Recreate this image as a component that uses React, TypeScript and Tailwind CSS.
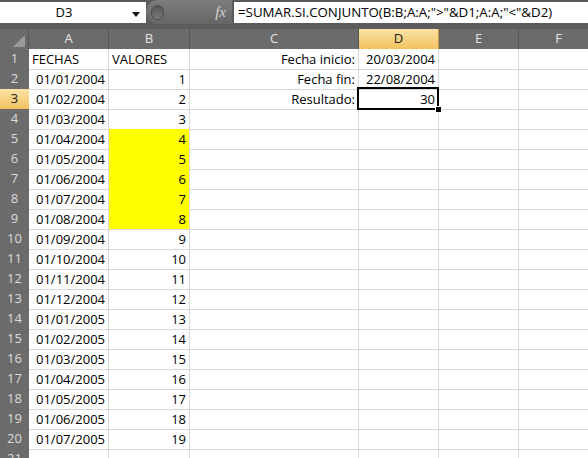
import React from "react";

const cols = ["A", "B", "C", "D", "E", "F"];

const dates = [
  "01/01/2004", "01/02/2004", "01/03/2004", "01/04/2004", "01/05/2004", "01/06/2004",
  "01/07/2004", "01/08/2004", "01/09/2004", "01/10/2004", "01/11/2004", "01/12/2004",
  "01/01/2005", "01/02/2005", "01/03/2005", "01/04/2005", "01/05/2005", "01/06/2005",
  "01/07/2005",
];

type Cell = { text: string; right?: boolean; yellow?: boolean };

// build the 21 visible rows
const rows: Cell[][] = Array.from({ length: 21 }, (_, i) => {
  const r = i + 1;
  const row: Cell[] = cols.map(() => ({ text: "" }));
  if (r === 1) {
    row[0] = { text: "FECHAS" };
    row[1] = { text: "VALORES" };
  } else if (r <= 20) {
    row[0] = { text: dates[r - 2], right: true };
    row[1] = { text: String(r - 1), right: true, yellow: r >= 5 && r <= 9 };
  }
  if (r === 1) {
    row[2] = { text: "Fecha inicio:", right: true };
    row[3] = { text: "20/03/2004", right: true };
  }
  if (r === 2) {
    row[2] = { text: "Fecha fin:", right: true };
    row[3] = { text: "22/08/2004", right: true };
  }
  if (r === 3) {
    row[2] = { text: "Resultado:", right: true };
    row[3] = { text: "30", right: true };
  }
  return row;
});

const grid = "grid grid-cols-[29px_80px_81px_169px_80px_80px_80px]";

export default function App() {
  return (
    <div
      className="w-[588px] h-[458px] overflow-hidden bg-white text-black"
      style={{ fontFamily: '"Open Sans", "Liberation Sans", sans-serif' }}
    >
      {/* Formula bar */}
      <div className="h-[29px] bg-[#5c5c5c] pt-[2px]">
        <div className="flex h-[21px]">
          {/* Name box */}
          <div className="relative w-[146px] bg-white flex items-center">
            <span className="w-[128px] text-center text-[13px]">D3</span>
            <svg className="absolute left-[132px] top-[10px]" width="8" height="5" viewBox="0 0 8 5">
              <path d="M0 0h8L4 5z" fill="#111" />
            </svg>
          </div>
          {/* Grip pill + fx */}
          <div className="relative w-[86px] -mt-[2px] h-[24px] rounded-l-full bg-gradient-to-b from-[#7c7c7c] to-[#666] flex items-center">
            <div className="ml-[5px] w-[13px] h-[15px] rounded-full bg-gradient-to-b from-[#555] to-[#7a7a7a] border border-[#4c4c4c]" />
            <span
              className="ml-auto mr-[6px] italic text-[15px] text-[#d6d6d6]"
              style={{ fontFamily: '"Liberation Serif", serif' }}
            >
              fx
            </span>
          </div>
          {/* Formula input */}
          <div className="flex-1 ml-[2px] bg-white flex items-center pl-[4px] text-[13.3px] whitespace-nowrap">
            =SUMAR.SI.CONJUNTO(B:B;A:A;"&gt;"&amp;D1;A:A;"&lt;"&amp;D2)
          </div>
        </div>
      </div>

      {/* Column headers */}
      <div className={`${grid} h-[20px] bg-[#6b6b6b]`}>
        <div className="relative border-r border-[#555]">
          <svg className="absolute right-[3px] bottom-[2px]" width="12" height="12" viewBox="0 0 12 12">
            <path d="M12 0V12H0z" fill="#9a9a9a" />
          </svg>
        </div>
        {cols.map((c) =>
          c === "D" ? (
            <div
              key={c}
              className="flex items-center justify-center border-r border-[#c99a3c] bg-gradient-to-b from-[#fbe3a6] to-[#f1c15c] text-[13px] text-[#1a1a1a]"
            >
              {c}
            </div>
          ) : (
            <div
              key={c}
              className="flex items-center justify-center border-r border-[#555] text-[13px] text-[#e4e4e4]"
            >
              {c}
            </div>
          )
        )}
      </div>

      {/* Rows */}
      {rows.map((row, i) => {
        const r = i + 1;
        return (
          <div key={r} className={`${grid} h-[20px]`}>
            {r === 3 ? (
              <div className="flex items-center justify-center border-b border-[#c99a3c] bg-gradient-to-b from-[#fbe3a6] to-[#f1c15c] text-[13px] text-[#1a1a1a]">
                {r}
              </div>
            ) : (
              <div className="flex items-center justify-center bg-[#6b6b6b] border-b border-[#5a5a5a] text-[13px] text-[#dcdcdc]">
                {r}
              </div>
            )}
            {row.map((cell, j) => {
              const selected = r === 3 && j === 3;
              return (
                <div
                  key={j}
                  className={`relative flex items-center whitespace-nowrap text-[13px] leading-[19px] pt-[1px] border-r border-[#d8d8d8] ${
                    cell.right ? "justify-end pr-[3px]" : "pl-[3px]"
                  } ${
                    cell.yellow
                      ? r === 9
                        ? "bg-[#ffff00] border-b border-b-[#d8d8d8]"
                        : "bg-[#ffff00] border-b border-b-[#ffff00]"
                      : "border-b border-b-[#d8d8d8]"
                  } ${selected ? "z-10" : ""}`}
                >
                  {cell.text}
                  {selected && (
                    <>
                      <div className="absolute -left-[2px] -top-[2px] -right-[1px] -bottom-[1px] border-[2.5px] border-black" />
                      <div className="absolute -right-[4px] -bottom-[4px] w-[7px] h-[7px] bg-black border border-white" />
                    </>
                  )}
                </div>
              );
            })}
          </div>
        );
      })}
    </div>
  );
}
